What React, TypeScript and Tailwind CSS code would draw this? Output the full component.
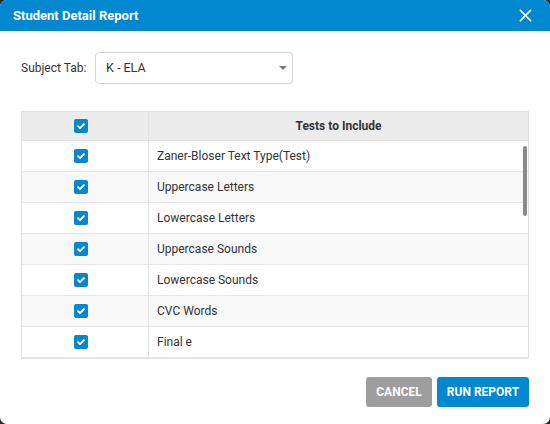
import React from 'react';

const tests = [
  'Zaner-Bloser Text Type(Test)',
  'Uppercase Letters',
  'Lowercase Letters',
  'Uppercase Sounds',
  'Lowercase Sounds',
  'CVC Words',
  'Final e',
];

function Check() {
  return (
    <span className="flex h-[14px] w-[14px] items-center justify-center rounded-[2px] bg-[#0a86cc]">
      <svg viewBox="0 0 12 12" className="h-[10px] w-[10px]" fill="none" stroke="white" strokeWidth={2.3} strokeLinecap="round" strokeLinejoin="round">
        <path d="M2.5 6.2l2.3 2.3 4.7-4.8" />
      </svg>
    </span>
  );
}

export default function App() {
  return (
    <div className="h-[424px] w-[550px] bg-[#2a2a2a] font-['Roboto',sans-serif]">
      <div className="flex h-full w-full flex-col overflow-hidden rounded-[7px] bg-white">
        <div className="flex h-[31px] shrink-0 items-center justify-between bg-[#0288d1] pl-[13px] pr-[18px]">
          <span className="text-[13px] font-bold text-white">Student Detail Report</span>
          <svg viewBox="0 0 14 14" className="h-[13px] w-[13px]" stroke="white" strokeWidth={1.8} strokeLinecap="round">
            <path d="M1.5 1.5l11 11M12.5 1.5l-11 11" />
          </svg>
        </div>

        <div className="flex flex-col px-[21px]">
          <div className="mt-[21px] flex items-center">
            <span className="w-[74px] pl-[-1px] text-[12px] text-[#333]">Subject Tab:</span>
            <div className="flex h-[32px] w-[198px] items-center justify-between rounded-[4px] border border-[#d4d4d4] pl-[10px] pr-[5px]">
              <span className="text-[12.5px] text-[#333]">K - ELA</span>
              <span className="h-0 w-0 border-x-[4px] border-t-[4px] border-x-transparent border-t-[#777]" />
            </div>
          </div>

          <div className="relative mt-[27px] border border-[#e2e2e2]">
            <div className="flex h-[29px] border-b border-[#e2e2e2] bg-[#ececec]">
              <div className="flex w-[127px] items-center justify-center border-r border-[#e2e2e2] pr-[9px]">
                <Check />
              </div>
              <div className="flex flex-1 items-center justify-center text-[12px] font-bold text-[#333]">Tests to Include</div>
            </div>
            <div className="h-[217px] overflow-hidden">
              {tests.map((t, i) => (
                <div key={t} className={`flex h-[31px] border-b border-[#e6e6e6] ${i % 2 ? 'bg-[#f8f8f8]' : 'bg-white'}`}>
                  <div className="flex w-[127px] items-center justify-center border-r border-[#e2e2e2] pr-[9px]">
                    <Check />
                  </div>
                  <div className="flex flex-1 items-center pl-[8px] text-[12px] text-[#333]">{t}</div>
                </div>
              ))}
            </div>
            <div className="absolute right-[1px] top-[34px] h-[70px] w-[4px] rounded-full bg-[#8a8a8a]" />
          </div>

          <div className="mt-[18px] flex justify-end gap-[5px]">
            <button className="h-[30px] w-[66px] rounded-[3px] bg-[#9e9e9e] text-[12px] font-bold text-white">CANCEL</button>
            <button className="h-[30px] w-[92px] rounded-[3px] bg-[#0288d1] text-[12px] font-bold text-white">RUN REPORT</button>
          </div>
        </div>
      </div>
    </div>
  );
}
